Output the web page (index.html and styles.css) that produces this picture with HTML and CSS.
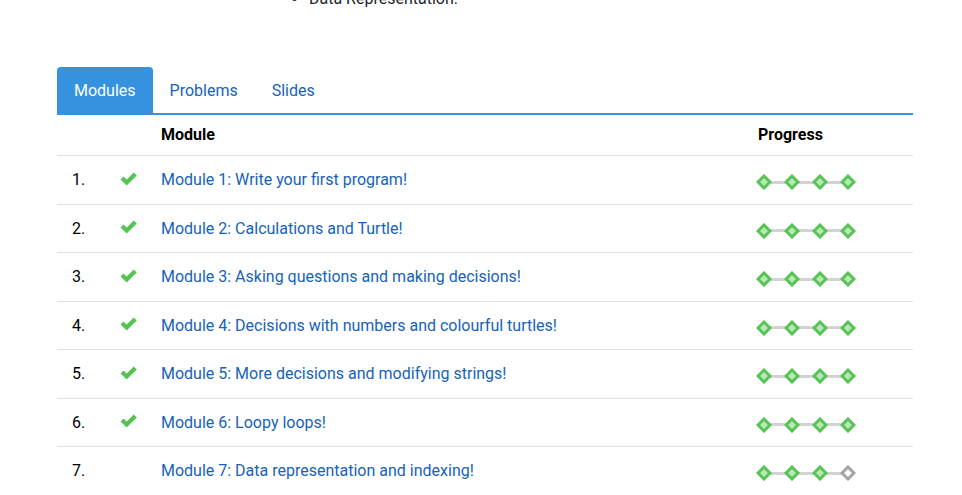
FILE: index.html
```html
<!DOCTYPE html>
<html lang="en">
<head>
<meta charset="utf-8">
<title>Course modules</title>
<link rel="stylesheet" href="styles.css">
</head>
<body>
<svg class="sprites" aria-hidden="true">
  <symbol id="tick" viewBox="0 0 16 14"><path fill="#55c455" d="M0 7.500 3 4.500 6.200 7.500 13.200 0.500 16.300 3.500 6.200 13.500Z"/></symbol>
  <symbol id="done" viewBox="0 0 16 16"><path fill="#b9e8b8" stroke="#57c455" stroke-width="3" d="M8 2 14 8 8 14 2 8Z"/></symbol>
  <symbol id="todo" viewBox="0 0 16 16"><path fill="#fff" stroke="#a3a3a3" stroke-width="3" d="M8 2 14 8 8 14 2 8Z"/></symbol>
</svg>
<main class="course">
  <ul class="topics"><li>Data Representation.</li></ul>
  <nav class="tabs">
    <a class="tab active" href="#modules">Modules</a>
    <a class="tab" href="#problems">Problems</a>
    <a class="tab" href="#slides">Slides</a>
  </nav>
  <table class="modules" id="modules">
    <thead><tr><th class="num"></th><th class="state"></th><th>Module</th><th class="progress">Progress</th></tr></thead>
    <tbody>
      <tr><td>1.</td><td><svg class="tick"><use href="#tick"/></svg></td><td><a href="#m1">Module 1: Write your first program!</a></td><td><div class="steps"><svg><use href="#done"/></svg><svg><use href="#done"/></svg><svg><use href="#done"/></svg><svg><use href="#done"/></svg></div></td></tr>
      <tr><td>2.</td><td><svg class="tick"><use href="#tick"/></svg></td><td><a href="#m2">Module 2: Calculations and Turtle!</a></td><td><div class="steps"><svg><use href="#done"/></svg><svg><use href="#done"/></svg><svg><use href="#done"/></svg><svg><use href="#done"/></svg></div></td></tr>
      <tr><td>3.</td><td><svg class="tick"><use href="#tick"/></svg></td><td><a href="#m3">Module 3: Asking questions and making decisions!</a></td><td><div class="steps"><svg><use href="#done"/></svg><svg><use href="#done"/></svg><svg><use href="#done"/></svg><svg><use href="#done"/></svg></div></td></tr>
      <tr><td>4.</td><td><svg class="tick"><use href="#tick"/></svg></td><td><a href="#m4">Module 4: Decisions with numbers and colourful turtles!</a></td><td><div class="steps"><svg><use href="#done"/></svg><svg><use href="#done"/></svg><svg><use href="#done"/></svg><svg><use href="#done"/></svg></div></td></tr>
      <tr><td>5.</td><td><svg class="tick"><use href="#tick"/></svg></td><td><a href="#m5">Module 5: More decisions and modifying strings!</a></td><td><div class="steps"><svg><use href="#done"/></svg><svg><use href="#done"/></svg><svg><use href="#done"/></svg><svg><use href="#done"/></svg></div></td></tr>
      <tr><td>6.</td><td><svg class="tick"><use href="#tick"/></svg></td><td><a href="#m6">Module 6: Loopy loops!</a></td><td><div class="steps"><svg><use href="#done"/></svg><svg><use href="#done"/></svg><svg><use href="#done"/></svg><svg><use href="#done"/></svg></div></td></tr>
      <tr><td>7.</td><td></td><td><a href="#m7">Module 7: Data representation and indexing!</a></td><td><div class="steps"><svg><use href="#done"/></svg><svg><use href="#done"/></svg><svg><use href="#done"/></svg><svg><use href="#todo"/></svg></div></td></tr>
    </tbody>
  </table>
</main>
</body>
</html>
```
FILE: styles.css
```css
* { box-sizing: border-box; }
body {
  margin: 0;
  background: #fff;
  color: #000;
  font: 16px/24px Roboto, "Liberation Sans", sans-serif;
  overflow: hidden;
}
a { color: #1663b8; text-decoration: none; }
.sprites { display: none; }
.course { padding: 0 49px 0 57px; }
.topics {
  margin: -13px 0 56px;
  padding-left: 252px;
  color: #212529;
}
.tabs {
  display: flex;
  border-bottom: 2px solid #3592df;
}
.tab {
  padding: 12px 17px 10px;
  border-radius: 4px 4px 0 0;
}
.tab.active { background: #3592df; color: #fff; }
.modules {
  width: 100%;
  border-collapse: separate;
  border-spacing: 0;
  table-layout: fixed;
}
.modules th, .modules td {
  height: 48px;
  padding: 0 15px;
  border-bottom: 1px solid #dee2e6;
  text-align: left;
  vertical-align: middle;
}
.modules tbody tr:nth-child(odd) td { height: 49px; }
.modules thead th { height: 41px; }
.modules th { font-weight: 700; }
.modules .num { width: 48px; }
.modules .state { width: 41px; }
.modules .progress { width: 170px; }
.tick { display: block; width: 17px; height: 14px; margin-bottom: 3px; }
.steps {
  display: flex;
  gap: 12px;
  width: 100px;
  margin: 4px -2px 0;
  background: linear-gradient(#d3d3d3, #d3d3d3) center / 84px 3px no-repeat;
}
.steps svg { width: 16px; height: 16px; }
```
